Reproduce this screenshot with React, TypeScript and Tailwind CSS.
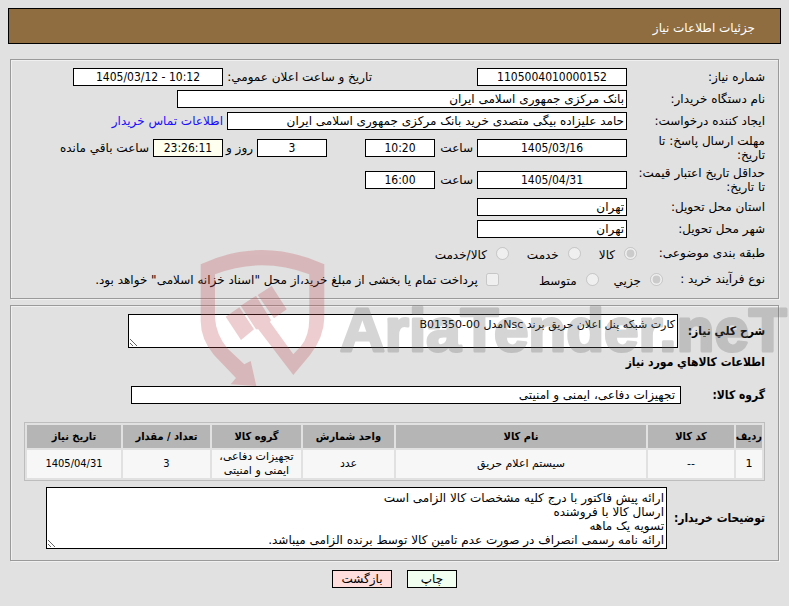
import type { ReactNode } from 'react'

const columns = [
  { title: 'ردیف', value: '1', width: 'w-[26px]' },
  { title: 'کد کالا', value: '--', width: 'w-[86px]' },
  { title: 'نام کالا', value: 'سیستم اعلام حریق', width: '' },
  { title: 'واحد شمارش', value: 'عدد', width: 'w-[91px]' },
  { title: 'گروه کالا', value: 'تجهیزات دفاعی، ایمنی و امنیتی', width: 'w-[89px]' },
  { title: 'تعداد / مقدار', value: '3', width: 'w-[87px]', numeric: true },
  { title: 'تاریخ نیاز', value: '1405/04/31', width: 'w-[94px]', numeric: true },
]

const buyerNotes = [
  'ارائه پیش فاکتور با درج کلیه مشخصات کالا الزامی است',
  'ارسال کالا با فروشنده',
  'تسویه یک ماهه',
  'ارائه نامه رسمی انصراف در صورت عدم تامین کالا توسط برنده الزامی میباشد.',
].join('\n')

const condensed = "font-['DejaVu_Sans_Condensed','DejaVu_Sans',sans-serif]"
const heading = `${condensed} text-[12px] font-bold`
const area = 'block border border-black bg-white px-[2px] pt-[3px] leading-[14px] overflow-hidden'

function Field({ id, value, className, label }: { id: string; value: string; className: string; label?: string }) {
  return (
    <input
      id={id}
      aria-label={label}
      type="text"
      readOnly
      defaultValue={value}
      className={`h-[18px] shrink-0 border border-black px-[2px] leading-[14px] ${className}`}
    />
  )
}

function Row({ id, label, className = 'h-[22px]', children }: { id: string; label: string; className?: string; children: ReactNode }) {
  return (
    <div className={`flex items-center ${className}`}>
      <label htmlFor={id} className="w-[138px] shrink-0 pl-[6px]">{label}</label>
      <div className="flex items-center gap-1 whitespace-nowrap">{children}</div>
    </div>
  )
}

function Radio({ name, label, checked }: { name: string; label: string; checked?: boolean }) {
  return (
    <label className="flex items-center gap-[9px] whitespace-nowrap">
      <input type="radio" name={name} disabled defaultChecked={checked} className="size-[13px]" />
      <span className="pt-1">{label}</span>
    </label>
  )
}

function Panel({ className, children }: { className: string; children: ReactNode }) {
  return (
    <section className={`mx-[2px] border border-[#9a9a9a] px-[13px] shadow-[inset_1px_1px_0_#f0f0f0,1px_1px_0_#f0f0f0] ${className}`}>
      {children}
    </section>
  )
}

function Watermark() {
  return (
    <svg aria-hidden="true" viewBox="0 0 600 150" className="pointer-events-none absolute left-[190px] top-[245px] h-[150px] w-[600px]">
      <g fill="#c04a50" opacity="0.27">
        <path d="M10.7 19.3 Q71.7 -9.3 134.3 19.3 L134.3 73 Q134 92 120 110 L103.3 130 L68.3 84.3 L66 84.3 L50.7 60.7 L66 50.7 L81 75 L80 77 L103.3 109.3 L111 101 Q119.3 91 119.3 73 L119.3 29.3 Q71.7 11.3 25 29.3 L25 73 Q26 90 38 104 L54.3 119.3 L60.7 116 L66.3 141 L40.7 139.3 L46 133 L24 110 Q10.7 94 10.7 76 Z" />
        <path d="M35.7 71.7 L49.3 62.3 L64 84.3 L51 95 Z" />
        <path d="M67.7 50 L81.7 41 L96.7 64.3 L84 73.3 Z" />
      </g>
      <text
        x="150"
        y="106"
        direction="ltr"
        fill="#676767"
        stroke="#676767"
        strokeWidth="3"
        strokeLinejoin="round"
        opacity="0.27"
        className="font-['Liberation_Sans_Narrow','Liberation_Sans',sans-serif] text-[62px] font-bold"
      >
        AriaTender.neT
      </text>
    </svg>
  )
}

export default function App() {
  return (
    <div dir="rtl" className="relative min-h-screen overflow-hidden bg-[#e1e1e1] p-2 font-['DejaVu_Sans',sans-serif] text-[12px] leading-[14px] text-black">
      <header className="flex h-9 items-center border border-black bg-[#8f6d40] px-[25px] pt-1 text-white">
        <h1>جزئیات اطلاعات نیاز</h1>
      </header>

      <main>
        <Panel className="mt-[15px] pt-[6px] pb-[6px]">
          <Row id="number" label="شماره نیاز:">
            <Field id="number" value="1105004010000152" className={`${condensed} w-[150px] bg-white text-center`} />
            <label htmlFor="announced" className="mr-[101px] w-[145px]">تاریخ و ساعت اعلان عمومي:</label>
            <Field id="announced" value="1405/03/12 - 10:12" className={`${condensed} w-[150px] bg-white text-center [direction:ltr]`} />
          </Row>
          <Row id="buyer" label="نام دستگاه خریدار:">
            <Field id="buyer" value="بانک مرکزی جمهوری اسلامی ایران" className="w-[450px] bg-white" />
          </Row>
          <Row id="creator" label="ایجاد کننده درخواست:">
            <Field id="creator" value="حامد علیزاده بیگی متصدی خرید بانک مرکزی جمهوری اسلامی ایران" className="w-[400px] bg-white" />
            <a href="#contact" className="text-[#1a0dff]">اطلاعات تماس خریدار</a>
          </Row>
          <Row id="deadline" label="مهلت ارسال پاسخ: تا تاریخ:" className="h-8">
            <Field id="deadline" value="1405/03/16" className={`${condensed} w-[150px] bg-white text-center`} />
            <label htmlFor="deadline-time" className="w-[34px]">ساعت</label>
            <Field id="deadline-time" value="10:20" className={`${condensed} w-[70px] bg-white text-center`} />
            <Field id="days" label="روز" value="3" className={`${condensed} mr-[34px] w-[70px] bg-white text-center`} />
            <label htmlFor="days" className="w-[26px]">روز و</label>
            <Field id="remaining" value="23:26:11" className={`${condensed} w-[70px] bg-[#fffff0] text-center`} />
            <label htmlFor="remaining">ساعت باقي مانده</label>
          </Row>
          <Row id="validity" label="حداقل تاریخ اعتبار قیمت: تا تاریخ:" className="h-8">
            <Field id="validity" value="1405/04/31" className={`${condensed} w-[150px] bg-white text-center`} />
            <label htmlFor="validity-time" className="w-[34px]">ساعت</label>
            <Field id="validity-time" value="16:00" className={`${condensed} w-[70px] bg-white text-center`} />
          </Row>
          <Row id="province" label="استان محل تحویل:">
            <Field id="province" value="تهران" className="w-[150px] bg-white" />
          </Row>
          <Row id="city" label="شهر محل تحویل:">
            <Field id="city" value="تهران" className="w-[150px] bg-white" />
          </Row>
          <div role="radiogroup" aria-label="طبقه بندی موضوعی" className="flex h-[26px] items-center">
            <span className="w-[128px] shrink-0">طبقه بندی موضوعی:</span>
            <div className="flex gap-[18px]">
              <Radio name="subject" label="کالا" checked />
              <Radio name="subject" label="خدمت" />
              <Radio name="subject" label="کالا/خدمت" />
            </div>
          </div>
          <div className="flex h-[26px] items-center">
            <span className="w-[102px] shrink-0">نوع فرآیند خرید :</span>
            <div className="flex gap-[15px]">
              <Radio name="process" label="جزیي" checked />
              <Radio name="process" label="متوسط" />
            </div>
            <label className="mr-10 flex items-center gap-2 whitespace-nowrap">
              <input type="checkbox" disabled className="size-[13px]" />
              <span className="pt-[2px]">پرداخت تمام یا بخشی از مبلغ خرید،از محل "اسناد خزانه اسلامی" خواهد بود.</span>
            </label>
          </div>
        </Panel>

        <Panel className="mt-[6px] pt-2 pb-[11px]">
          <div className="flex items-center gap-[5px]">
            <label htmlFor="summary" className={`${heading} w-[82px] shrink-0 whitespace-nowrap`}>شرح کلي نیاز:</label>
            <textarea id="summary" readOnly defaultValue="کارت شبکه پنل اعلان حریق برند Nscمدل B01350-00" className={`${area} h-[34px] w-[550px] text-[11px]`} />
          </div>
          <h2 className={`${heading} mt-[7px]`}>اطلاعات کالاهاي مورد نیاز</h2>
          <div className="mt-[17px] flex items-center">
            <label htmlFor="group" className={`${heading} w-[84px] shrink-0`}>گروه کالا:</label>
            <Field id="group" value="تجهیزات دفاعی، ایمنی و امنیتی" className="w-[550px] bg-white pr-[5px]" />
          </div>

          <table className="mt-[18px] w-full table-fixed border-separate border-spacing-[2px] border border-[#bdbdbd] text-center text-[11px]">
            <thead>
              <tr className="h-[23px] bg-[#b5b5b5]">
                {columns.map((c) => (
                  <th key={c.title} scope="col" className={`${condensed} ${c.width} whitespace-nowrap font-bold`}>{c.title}</th>
                ))}
              </tr>
            </thead>
            <tbody>
              <tr className="h-[28px] bg-[#f7f7f7]">
                {columns.map((c) => (
                  <td key={c.title} className={c.numeric ? condensed : ''}>{c.value}</td>
                ))}
              </tr>
            </tbody>
          </table>

          <div className="mt-[6px] flex items-center gap-[5px]">
            <label htmlFor="notes" className={`${heading} w-[93px] shrink-0 whitespace-nowrap`}>توضیحات خریدار:</label>
            <textarea id="notes" readOnly defaultValue={buyerNotes} className={`${area} ml-[22px] h-[62px] flex-1`} />
          </div>
        </Panel>

        <div className="mt-[9px] flex justify-center gap-[15px]">
          <button type="button" className="h-[18px] w-[50px] border border-black bg-[#f0fff0]">چاپ</button>
          <button type="button" className="h-[18px] w-[60px] border border-black bg-[#ffdddd]">بازگشت</button>
        </div>
      </main>

      <Watermark />
    </div>
  )
}
